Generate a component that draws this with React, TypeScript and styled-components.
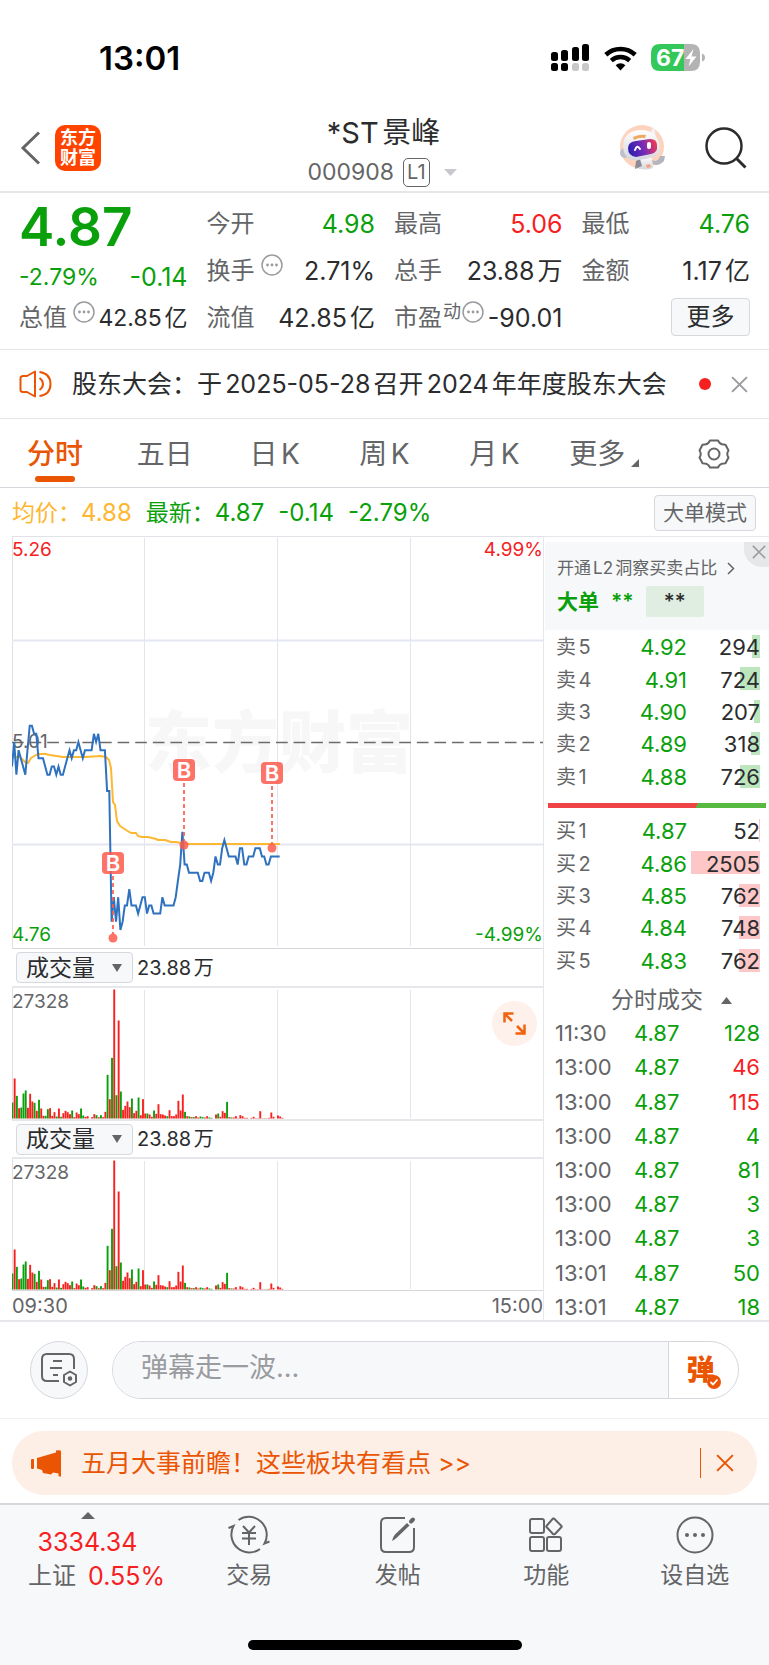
import React from "react";
import styled, { createGlobalStyle } from "styled-components";

const C = {
  green: "#09a00b",
  red: "#f6211f",
  text: "#2b2c2e",
  grey: "#646567",
  faint: "#999b9f",
  line: "#e6e7eb",
  strong: "#d6d8de",
  orange: "#ea5504",
  panel: "#f7f8fa",
};

type Tone = "green" | "red" | "text" | "grey";

const GlobalStyle = createGlobalStyle`
  *, *::before, *::after { box-sizing: border-box; }
  body {
    margin: 0;
    background: #fff;
    color: ${C.text};
    font-family: Inter, "Noto Sans CJK SC", sans-serif;
    font-size: 24px;
    line-height: 30px;
    text-autospace: normal;
  }
  button, input {
    margin: 0;
    padding: 0;
    border: 0;
    background: none;
    color: inherit;
    font: inherit;
    text-autospace: inherit;
  }
  button { cursor: pointer; }
  svg { display: block; flex-shrink: 0; }
`;

const Page = styled.div`
  display: flex;
  flex-direction: column;
  min-height: 100vh;
`;

/* ---------- status bar ---------- */

const StatusBar = styled.div`
  height: 108px;
  padding: 8px 64px 0 99px;
  display: flex;
  align-items: center;
  justify-content: space-between;
`;

const Clock = styled.time`
  color: #000;
  font-size: 33px;
  line-height: 40px;
  font-weight: 600;
`;

const StatusIcons = styled.div`
  display: flex;
  align-items: center;
  gap: 14px;
`;

/* ---------- header ---------- */

const Header = styled.header`
  height: 85px;
  padding: 0 22px 0 20px;
  border-bottom: 2px solid ${C.line};
  display: grid;
  grid-template-columns: 1fr auto 1fr;
  align-items: center;
`;

const HeaderSide = styled.div<{ $end?: boolean }>`
  padding-bottom: 4px;
  display: flex;
  align-items: center;
  justify-content: ${(p) => (p.$end ? "flex-end" : "flex-start")};
  gap: ${(p) => (p.$end ? 40 : 14)}px;
`;

const IconButton = styled.button`
  display: flex;
  align-items: center;
  justify-content: center;
`;

const Logo = styled.a`
  width: 46px;
  height: 46px;
  border-radius: 10px;
  background: #ff4400;
  color: #fff;
  font-size: 18px;
  line-height: 20px;
  font-weight: 700;
  text-align: center;
  text-decoration: none;
  display: flex;
  flex-direction: column;
  justify-content: center;
`;

const TitleBlock = styled.div`
  padding-top: 4px;
  display: flex;
  flex-direction: column;
  align-items: center;
  gap: 7px;
`;

const Title = styled.h1`
  margin: 0;
  font-size: 29px;
  line-height: 34px;
  font-weight: 400;
`;

const Code = styled.div`
  padding-right: 3px;
  display: flex;
  align-items: center;
  gap: 9px;
  color: ${C.grey};
  font-size: 23px;
`;

const Level = styled.span`
  height: 29px;
  padding: 0 3px;
  border: 1px solid ${C.grey};
  border-radius: 5px;
  font-size: 20px;
  line-height: 27px;
`;

const CodeCaret = styled.span`
  margin-left: 5px;
`;

/* ---------- quote ---------- */

const Quote = styled.section`
  height: 157px;
  padding: 7px 19px 0;
  border-bottom: 1px solid ${C.line};
  display: grid;
  grid-template-columns: repeat(4, 1fr);
  grid-template-rows: repeat(3, 47px);
  column-gap: 19px;
`;

const Headline = styled.div`
  grid-row: span 2;
  display: flex;
  flex-direction: column;
  justify-content: space-between;
  color: ${C.green};
`;

const Price = styled.strong`
  font-size: 53px;
  line-height: 54px;
  font-weight: 600;
`;

const Change = styled.div`
  display: flex;
  justify-content: space-between;
  font-size: 23px;
  line-height: 34px;
`;

const ChangeAmount = styled.span`
  font-size: 25px;
`;

const Stat = styled.div`
  display: flex;
  align-items: center;
  white-space: nowrap;
`;

const StatLabel = styled.span`
  color: ${C.grey};
`;

const StatNote = styled.span<{ $gap: number }>`
  margin: 0 0 12px ${(p) => p.$gap}px;
  display: flex;
  align-items: center;
  color: ${C.faint};
`;

const Superscript = styled.span`
  color: ${C.grey};
  font-size: 18px;
  line-height: 24px;
`;

const StatValue = styled.span<{ $tone: Tone; $tight?: boolean }>`
  margin-left: auto;
  color: ${(p) => C[p.$tone]};
  font-size: ${(p) => (p.$tight ? 23 : 25)}px;
`;

const OutlineButton = styled.button`
  border: 1px solid ${C.strong};
  border-radius: 4px;
  background: ${C.panel};
`;

const MoreButton = styled(OutlineButton)`
  width: 79px;
  height: 38px;
  margin: 0 0 2px auto;
  line-height: 34px;
`;

/* ---------- notice ---------- */

const Notice = styled.section`
  height: 69px;
  padding: 0 21px 0 19px;
  border-bottom: 1px solid ${C.line};
  display: flex;
  align-items: center;
`;

const NoticeText = styled.a`
  flex: 1;
  min-width: 0;
  margin-left: 19px;
  overflow: hidden;
  color: inherit;
  font-size: 25px;
  text-decoration: none;
  white-space: nowrap;
`;

const Dot = styled.span`
  width: 12px;
  height: 12px;
  margin: 0 20px 0 14px;
  border-radius: 50%;
  background: ${C.red};
`;

/* ---------- tabs ---------- */

const Tabs = styled.nav`
  height: 69px;
  border-bottom: 1px solid ${C.strong};
  display: grid;
  grid-template-columns: repeat(7, 1fr);
`;

const Tab = styled.button<{ $active?: boolean }>`
  position: relative;
  padding-top: 1px;
  display: flex;
  align-items: center;
  justify-content: center;
  gap: 6px;
  color: ${(p) => (p.$active ? C.orange : C.grey)};
  font-size: 28px;
  font-weight: ${(p) => (p.$active ? 500 : 400)};

  &::after {
    content: "";
    display: ${(p) => (p.$active ? "block" : "none")};
    position: absolute;
    bottom: 5px;
    left: calc(50% - 20px);
    width: 40px;
    height: 6px;
    border-radius: 3px;
    background: ${C.orange};
  }
`;

const TabCorner = styled.span`
  align-self: flex-end;
  margin-bottom: 20px;
`;

/* ---------- chart summary ---------- */

const Summary = styled.div`
  height: 48px;
  padding: 1px 13px 0 12px;
  display: flex;
  align-items: center;
  gap: 14px;
  color: ${C.green};
  font-size: 23px;
`;

const Average = styled.span`
  color: #feb731;
`;

const Figure = styled.span`
  font-size: 24px;
`;

const ModeButton = styled(OutlineButton)`
  height: 36px;
  margin-left: auto;
  padding: 0 8px;
  color: ${C.grey};
  font-size: 21px;
  line-height: 32px;
`;

/* ---------- market area ---------- */

const Market = styled.main`
  padding-left: 12px;
  border-bottom: 2px solid ${C.line};
  display: grid;
  grid-template-columns: 1fr 226px;
`;

const Charts = styled.div`
  position: relative;
  min-width: 0;
`;

const ChartSvg = styled.svg`
  width: 100%;
  height: auto;
  font-family: Inter, "Noto Sans CJK SC", sans-serif;
`;

const VolumeHead = styled.div<{ $top: string }>`
  height: 40px;
  padding: 0 4px;
  border-top: ${(p) => p.$top};
  border-bottom: 2px solid ${C.line};
  display: flex;
  align-items: center;
  gap: 4px;
  font-size: 20px;
`;

const IndicatorButton = styled(OutlineButton)`
  width: 117px;
  height: 31px;
  padding: 0 10px 0 9px;
  display: flex;
  align-items: center;
  justify-content: space-between;
  font-size: 23px;
  line-height: 28px;
`;

const Axis = styled.div`
  height: 29px;
  border-top: 1px solid ${C.strong};
  display: flex;
  justify-content: space-between;
  color: ${C.grey};
  font-size: 20px;
  line-height: 30px;
`;

const ExpandButton = styled.button`
  position: absolute;
  top: 465px;
  right: 6px;
  width: 45px;
  height: 45px;
  border-radius: 50%;
  background: #fef0ea;
  display: flex;
  align-items: center;
  justify-content: center;
`;

const Side = styled.aside`
  padding-top: 5px;
  border-top: 1px solid ${C.line};
  border-left: 1px solid ${C.line};
  overflow: hidden;
`;

const Promo = styled.div`
  position: relative;
  height: 88px;
  margin: 0 0 1px 1px;
  padding: 11px 12px 0;
  background: ${C.panel};
`;

const PromoLink = styled.a`
  display: flex;
  align-items: center;
  gap: 10px;
  color: ${C.grey};
  font-size: 17px;
  text-decoration: none;
  white-space: nowrap;
`;

const PromoClose = styled.button`
  position: absolute;
  top: 0;
  right: 0;
  width: 25px;
  height: 25px;
  padding: 3px 3px 0 0;
  border-bottom-left-radius: 18px;
  background: #e6e7e9;
  display: flex;
  align-items: flex-start;
  justify-content: flex-end;
`;

const BigOrder = styled.div`
  margin-top: 3px;
  display: flex;
  align-items: center;
  gap: 12px;
  color: ${C.green};
  font-size: 21px;
  font-weight: 600;
`;

const Masked = styled.span`
  width: 58px;
  height: 31px;
  border-radius: 2px;
  background: #e0eee1;
  color: ${C.text};
  line-height: 31px;
  font-weight: 500;
  text-align: center;
`;

const Book = styled.table`
  width: 100%;
  height: 162px;
  border-collapse: collapse;
  color: ${C.text};
  font-size: 22px;
  line-height: 26px;

  th, td {
    padding: 0;
    font-weight: 400;
    text-align: right;
  }
  th {
    width: 60px;
    padding-left: 12px;
    color: ${C.grey};
    font-size: 20px;
    text-align: left;
  }
`;

const BookPrice = styled.td`
  width: 83px;
  color: ${C.green};
`;

const BookVolume = styled.td`
  position: relative;

  && { padding-right: 9px; }
`;

const BookBar = styled.span<{ $tone: "green" | "red" }>`
  position: absolute;
  top: 4px;
  right: 9px;
  height: 23px;
  background: ${(p) => (p.$tone === "green" ? "#bde6bf" : "#fdc7c7")};
`;

const BookNumber = styled.span`
  position: relative;
`;

const Balance = styled.div`
  height: 5px;
  margin: 10px 3px 7px 4px;
  background: linear-gradient(120deg, #ee4445 68%, #57b942 68%);
`;

const TradesTitle = styled.button`
  width: 100%;
  height: 32px;
  margin-top: 7px;
  padding-left: 30px;
  display: flex;
  align-items: center;
  justify-content: center;
  gap: 18px;
  color: ${C.grey};
  font-size: 23px;
`;

const Trades = styled.table`
  width: 100%;
  height: 308px;
  margin-bottom: -4px;
  border-collapse: collapse;
  font-size: 22px;
  line-height: 24px;

  td { padding: 0; }
`;

const TradeTime = styled.td`
  width: 90px;
  && { padding-left: 11px; }
  color: ${C.grey};
`;

const TradePrice = styled.td`
  color: ${C.green};
`;

const TradeVolume = styled.td<{ $tone: Tone }>`
  && { padding-right: 9px; }
  color: ${(p) => C[p.$tone]};
  text-align: right;
`;

/* ---------- comment bar ---------- */

const Composer = styled.form`
  height: 97px;
  padding: 0 30px;
  border-bottom: 1px solid #f0f0f1;
  display: flex;
  align-items: center;
  gap: 24px;
`;

const RoundButton = styled.button`
  width: 58px;
  height: 58px;
  border: 1px solid ${C.strong};
  border-radius: 50%;
  background: ${C.panel};
  display: flex;
  align-items: center;
  justify-content: center;
`;

const Pill = styled.div`
  flex: 1;
  min-width: 0;
  height: 58px;
  border: 1px solid ${C.strong};
  border-radius: 29px;
  display: flex;
  overflow: hidden;
`;

const CommentInput = styled.input`
  flex: 1;
  min-width: 0;
  padding: 0 28px 4px;
  background: ${C.panel};
  font-size: 27px;
  outline: none;

  &::placeholder { color: ${C.faint}; opacity: 1; }
`;

const DanmuButton = styled.button`
  width: 70px;
  padding-right: 6px;
  border-left: 1px solid ${C.strong};
  display: flex;
  align-items: center;
  justify-content: center;
`;

const DanmuMark = styled.span`
  position: relative;
  color: ${C.orange};
  font-size: 28px;
  font-weight: 900;

  svg {
    position: absolute;
    right: -6px;
    bottom: -4px;
  }
`;

/* ---------- banner ---------- */

const BannerWrap = styled.div`
  height: 84px;
  padding: 12px 12px 0;
`;

const Banner = styled.div`
  height: 64px;
  padding: 0 23px 0 19px;
  border-radius: 32px;
  background: #fdeee6;
  color: ${C.orange};
  display: flex;
  align-items: center;
`;

const BannerText = styled.a`
  flex: 1;
  margin-left: 19px;
  color: inherit;
  font-size: 25px;
  text-decoration: none;
`;

const BannerRule = styled.span`
  width: 1px;
  height: 30px;
  margin-right: 15px;
  background: ${C.orange};
`;

/* ---------- bottom navigation ---------- */

const BottomBar = styled.footer`
  flex: 1;
  min-height: 163px;
  border-top: 2px solid ${C.strong};
  background: ${C.panel};
  display: flex;
  flex-direction: column;
  align-items: center;
  justify-content: space-between;
`;

const BottomNav = styled.nav`
  width: 100%;
  display: grid;
  grid-template-columns: 175px repeat(4, 1fr);
`;

const IndexButton = styled.button`
  padding-top: 7px;
  display: flex;
  flex-direction: column;
  align-items: center;
  color: ${C.red};
  font-size: 25px;
`;

const IndexValue = styled.span`
  margin: 8px 0 4px;
`;

const IndexRow = styled.span`
  padding-left: 18px;
  display: flex;
  gap: 12px;
`;

const IndexName = styled.span`
  color: ${C.grey};
  font-size: 24px;
`;

const NavButton = styled.button`
  padding-top: 10px;
  display: flex;
  flex-direction: column;
  align-items: center;
  gap: 5px;
  color: ${C.grey};
  font-size: 23px;
`;

const HomeIndicator = styled.div`
  width: 274px;
  height: 10px;
  margin-bottom: 16px;
  border-radius: 5px;
  background: #000;
`;

/* ---------- icons ---------- */

const Triangle = ({ w, h, up, color = C.grey }: { w: number; h: number; up?: boolean; color?: string }) => (
  <svg width={w} height={h} viewBox="0 0 10 10" preserveAspectRatio="none" aria-hidden="true">
    <path d={up ? "M5 0L10 10H0Z" : "M0 0H10L5 10Z"} fill={color} />
  </svg>
);

const Cross = ({ size, color }: { size: number; color: string }) => (
  <svg width={size} height={size} viewBox="0 0 16 16" aria-hidden="true">
    <path d="M1 1L15 15M15 1L1 15" stroke={color} strokeWidth="1.800" fill="none" />
  </svg>
);

const SignalIcon = () => (
  <svg width="39" height="28" viewBox="0 0 39 28" aria-hidden="true">
    <g fill="#000">
      <rect x="0" y="8" width="7" height="9" rx="2.500" />
      <rect x="10" y="6" width="7" height="11" rx="2.500" />
      <rect x="21" y="3" width="7" height="14" rx="2.500" />
      <rect x="31" y="0" width="7" height="17" rx="2.500" />
      <rect x="0" y="19" width="7" height="8" rx="2.500" />
      <rect x="10" y="19" width="7" height="8" rx="2.500" />
    </g>
    <g fill="#c8c8c8">
      <rect x="21" y="19" width="7" height="8" rx="2.500" />
      <rect x="31" y="19" width="7" height="8" rx="2.500" />
    </g>
  </svg>
);

const WifiIcon = () => (
  <svg width="33" height="25" viewBox="0 0 33 25" aria-hidden="true">
    <path d="M1.800 8.800A21.500 21.500 0 0 1 31.200 8.800" fill="none" stroke="#000" strokeWidth="4.600" />
    <path d="M7.300 14.600A13.500 13.500 0 0 1 25.700 14.600" fill="none" stroke="#000" strokeWidth="4.400" />
    <path d="M11.600 19.200A7 7 0 0 1 21.400 19.200L16.500 24.500Z" fill="#000" />
  </svg>
);

const BatteryIcon = () => (
  <svg width="54" height="28" viewBox="0 0 54 28" aria-label="67%">
    <path d="M33 0H40Q49 0 49 9V18Q49 27 40 27H33Z" fill="#b3b3b3" />
    <path d="M33 0H9Q0 0 0 9V18Q0 27 9 27H33Z" fill="#34c759" />
    <path d="M51 9.500Q54 10.500 54 13.500T51 17.500Z" fill="#b3b3b3" />
    <path d="M42.500 5L34.500 15H39.500L37.500 22.500L45.500 12.500H40.500Z" fill="#fff" />
    <text x="5" y="22" fill="#fff" fontSize="23" fontWeight="700" fontFamily="Inter, sans-serif">67</text>
  </svg>
);

const RobotIcon = () => (
  <svg width="45" height="45" viewBox="0 0 45 45" aria-hidden="true">
    <defs>
      <linearGradient id="visor" x1="0" y1="0.600" x2="1" y2="0.400">
        <stop offset="0" stopColor="#2d1fb0" />
        <stop offset="0.550" stopColor="#7a2bb5" />
        <stop offset="1" stopColor="#ef3a55" />
      </linearGradient>
      <linearGradient id="shell" x1="0" y1="0" x2="0" y2="1">
        <stop offset="0" stopColor="#fff" />
        <stop offset="1" stopColor="#d5d6de" />
      </linearGradient>
    </defs>
    <circle cx="22" cy="22" r="22" fill="#fdd3bd" />
    <path d="M19 32Q26 29 32 33L33 43Q26 46 18 43Z" fill="url(#shell)" />
    <path d="M16 36L20 34L22 41L15 44Z" fill="#8d8c96" />
    <path d="M32 35Q38 38 40 31L45 31L44 36Q38 42 33 39Z" fill="#b4b4bf" />
    <path d="M26 40L30 39L31 42L27 43Z" fill="#f3a27e" />
    <circle cx="5" cy="28" r="5" fill="#bfc0ca" />
    <path d="M30 8L34 1L36 12Z" fill="#f2f2f5" />
    <path d="M3 22Q3 7 19 5Q34 4 39 17Q42 30 33 32Q22 36 11 35Q4 32 3 22Z" fill="url(#shell)" />
    <path d="M13 12Q20 9 26 10L25 13Q19 12 14 15Z" fill="#f2a65e" />
    <path d="M8 23Q8 17 16 16L30 14Q37 14 37 20Q38 28 31 29L16 32Q8 31 8 23Z" fill="url(#visor)" />
    <path d="M15 25Q17 19 20 24" fill="none" stroke="#fff" strokeWidth="2" strokeLinecap="round" />
    <rect x="27" y="17" width="4" height="7" rx="2" fill="#fff" />
  </svg>
);

const InfoIcon = () => (
  <svg width="22" height="22" viewBox="0 0 22 22" aria-hidden="true">
    <circle cx="11" cy="11" r="10" fill="none" stroke="currentColor" strokeWidth="1.500" />
    <g fill="currentColor">
      <circle cx="6.500" cy="11" r="1.400" />
      <circle cx="11" cy="11" r="1.400" />
      <circle cx="15.500" cy="11" r="1.400" />
    </g>
  </svg>
);

const SpeakerIcon = () => (
  <svg width="34" height="28" viewBox="0 0 34 28" fill="none" stroke={C.orange} strokeWidth="2" aria-hidden="true">
    <path d="M16 1.500V26.500L8 22H4Q1.500 22 1.500 19.500V8.500Q1.500 6 4 6H8Z" strokeLinejoin="round" />
    <path d="M20.500 8Q24 10.500 24 14T20.500 20" />
    <path d="M20.500 2Q31.500 3.500 31.500 14T20.500 26" />
  </svg>
);

const GearIcon = () => (
  <svg width="32" height="32" viewBox="0 0 32 32" fill="none" stroke={C.grey} strokeWidth="2" aria-hidden="true">
    <path
      d="M12 2.500H20Q22 6.500 25.500 6.500L27.500 6.800L30.500 12.500Q28 16 30.500 19.500L27.500 25.200L25.500 25.500Q22 25.500 20 29.500H12Q10 25.500 6.500 25.500L4.500 25.200L1.500 19.500Q4 16 1.500 12.500L4.500 6.800L6.500 6.500Q10 6.500 12 2.500Z"
      strokeLinejoin="round"
    />
    <circle cx="16" cy="16" r="5.500" />
  </svg>
);

const ExpandIcon = () => (
  <svg width="23" height="23" viewBox="0 0 23 23" fill="none" stroke="#f4610f" strokeWidth="2.500" aria-hidden="true">
    <path d="M10.500 1.500H1.500V10.500M1.500 1.500L9 9" />
    <path d="M12.500 21.500H21.500V12.500M21.500 21.500L14 14" />
  </svg>
);

const NoteIcon = () => (
  <svg width="38" height="34" viewBox="0 0 38 34" fill="none" stroke={C.grey} strokeWidth="2" aria-hidden="true">
    <path d="M19 28H7Q2 28 2 23V6Q2 1 7 1H29Q34 1 34 6V16" />
    <path d="M13 8H22M10 15H22M13 22H18" />
    <path d="M30 18.500L36 22V29L30 32.500L24 29V22Z" strokeLinejoin="round" />
    <circle cx="30" cy="25.500" r="1.300" fill={C.grey} />
  </svg>
);

const CheckBadge = () => (
  <svg width="14" height="14" viewBox="0 0 14 14" aria-hidden="true">
    <circle cx="7" cy="7" r="7" fill={C.orange} />
    <path d="M3.500 7L6 9.500L10.500 4.500" fill="none" stroke="#fff" strokeWidth="1.800" />
  </svg>
);

const MegaphoneIcon = () => (
  <svg width="31" height="27" viewBox="0 0 31 27" fill={C.orange} aria-hidden="true">
    <rect x="0" y="9" width="3" height="10" rx="1" />
    <path d="M6 8L25 2.500V0.500Q30 0 30 1V26Q30 27 27.500 26V23.500L22 22.500L20 24.500L12 23L11 20L6 18.500Z" />
  </svg>
);

const TradeIcon = () => (
  <svg width="42" height="40" viewBox="0 0 42 40" fill="none" stroke="currentColor" strokeWidth="2" aria-hidden="true">
    <path d="M10.500 5A18 18 0 0 1 36.500 28.500L41.500 26.500" />
    <path d="M32 34A18 18 0 0 1 5.500 11L0.500 13" />
    <path d="M15 11L21 17.500L27 11M21 17.500V30M14 18H28M14 23.500H28" />
  </svg>
);

const PostIcon = () => (
  <svg width="36" height="40" viewBox="0 0 36 40" fill="none" stroke="currentColor" strokeWidth="2" aria-hidden="true">
    <path d="M25 3H6Q1 3 1 8V32Q1 37 6 37H29Q34 37 34 32V13" />
    <path d="M12 26Q13 21.500 15 19.500L27 8L29.500 10.500L17 22.500Q14.500 24.500 12 26Z" fill="currentColor" stroke="none" />
    <path d="M31 6.500L33 4.500" strokeWidth="4" strokeLinecap="round" />
  </svg>
);

const GridIcon = () => (
  <svg width="36" height="40" viewBox="0 0 36 40" fill="none" stroke="currentColor" strokeWidth="2" aria-hidden="true">
    <rect x="2" y="4" width="14" height="14" rx="2" />
    <rect x="2" y="22" width="14" height="14" rx="2" />
    <rect x="19" y="22" width="14" height="14" rx="2" />
    <path d="M26 3.500L33.500 11Q34 11.500 33.500 12L27 19Q26 19.500 25 19L18.500 12Q18 11.500 18.500 11L25 3.500Z" strokeLinejoin="round" />
  </svg>
);

const DotsIcon = () => (
  <svg width="38" height="40" viewBox="0 0 38 40" aria-hidden="true">
    <circle cx="19" cy="20" r="17.500" fill="none" stroke="currentColor" strokeWidth="2" />
    <g fill="currentColor">
      <circle cx="11" cy="20" r="2" />
      <circle cx="19" cy="20" r="2" />
      <circle cx="27" cy="20" r="2" />
    </g>
  </svg>
);

/* ---------- data ---------- */

type StatItem = { label: string; value: string; tone: Tone; info?: boolean; sup?: string; tight?: boolean };

const stats: StatItem[] = [
  { label: "今开", value: "4.98", tone: "green" },
  { label: "最高", value: "5.06", tone: "red" },
  { label: "最低", value: "4.76", tone: "green" },
  { label: "换手", value: "2.71%", tone: "text", info: true },
  { label: "总手", value: "23.88万", tone: "text" },
  { label: "金额", value: "1.17亿", tone: "text" },
  { label: "总值", value: "42.85亿", tone: "text", info: true, tight: true },
  { label: "流值", value: "42.85亿", tone: "text" },
  { label: "市盈", value: "-90.01", tone: "text", info: true, sup: "动" },
];

// Last price of each minute since the open, in hundredths.
const prices = [
  498, 501, 497, 500, 499, 498, 497, 500, 503, 503, 502, 502, 499, 499, 499, 498, 497, 497, 498, 498, 497, 498, 497,
  497, 498, 499, 500, 499, 500, 500, 501, 500, 499, 500, 500, 500, 500, 502, 501, 502, 500, 500, 500, 495, 495, 479,
  482, 479, 482, 478, 479, 481, 481, 483, 481, 481, 481, 480, 481, 482, 482, 480, 481, 481, 480, 480, 480, 480, 482,
  481, 481, 481, 481, 481, 482, 484, 486, 490, 486, 486, 485, 485, 485, 485, 485, 484, 484, 485, 485, 485, 484, 485,
  487, 486, 486, 488, 489, 488, 487, 487, 487, 487, 486, 488, 488, 486, 486, 487, 487, 487, 488, 488, 488, 487, 487,
  486, 486, 487, 487, 487, 487, 487,
];

const averageLine =
  "0,221 8,221 13,226 16,227 19,222 24,219 28,218 33,218 38,219 51,221 61,221 74,221 88,220 94,221 97,224 99,232 101,266 103,269 105,285 108,290 114,294 119,297 124,297 126,300 130,301 136,301 144,303 146,304 153,304 159,306 164,306 169,307 176,308 214,308 218,308 268,308";

// Turnover of each minute: bar height in thirds of a pixel, with its direction.
const volumes =
  "g48 r120 g68 r31 g33 g75 g84 r32 r74 r51 g47 r23 g56 r30 r8 g8 g28 r31 r8 r19 g6 r30 g5 r16 r23 r19 r13 g24 r4 r18 r13 g30 g9 r5 r7 r0 r4 r13 g10 r4 g10 r4 r20 g131 r58 g182 r387 g70 r294 g81 r26 r38 r51 r34 g60 r16 r23 g63 r10 r58 r15 g15 r12 r5 g24 r14 r43 r13 r12 r9 g7 r25 r7 r7 r12 r53 r24 r72 g20 r7 g6 r4 g4 r7 r3 g6 g4 r3 r7 g3 g2 r0 r12 g15 r5 r22 r17 g50 r4 g3 r3 r7 r1 r10 r7 r2 r2 r0 r2 r5 r1 r1 r22 r1 g1 r1 r2 r18 r5 r0 r9 r6 r2"
    .split(" ")
    .map((s) => ({ up: s[0] === "r", size: Number(s.slice(1)) / 3 }));

const asks: [string, string, number][] = [
  ["卖5", "4.92", 294],
  ["卖4", "4.91", 724],
  ["卖3", "4.90", 207],
  ["卖2", "4.89", 318],
  ["卖1", "4.88", 726],
];

const bids: [string, string, number][] = [
  ["买1", "4.87", 52],
  ["买2", "4.86", 2505],
  ["买3", "4.85", 762],
  ["买4", "4.84", 748],
  ["买5", "4.83", 762],
];

const trades: [string, string, number, Tone][] = [
  ["11:30", "4.87", 128, "green"],
  ["13:00", "4.87", 46, "red"],
  ["13:00", "4.87", 115, "red"],
  ["13:00", "4.87", 4, "green"],
  ["13:00", "4.87", 81, "green"],
  ["13:00", "4.87", 3, "green"],
  ["13:00", "4.87", 3, "green"],
  ["13:01", "4.87", 50, "green"],
  ["13:01", "4.87", 18, "green"],
];

const MINUTE = 531 / 240;
const priceY = (p: number) => 206 + (501 - p) * 8.17;
const priceLine = prices.map((p, i) => `${(i * MINUTE).toFixed(1)},${priceY(p).toFixed(1)}`).join(" ");

const markers = [
  { x: 101, top: 316, dot: 402 },
  { x: 172, top: 223, dot: 309 },
  { x: 260, top: 226, dot: 312 },
];

/* ---------- parts ---------- */

const GridLines = ({ height }: { height: number }) => (
  <path d={`M132.500 2V${height}M265.500 2V${height}M398.500 2V${height}`} stroke="#e2e4ee" />
);

const PriceChart = () => (
  <ChartSvg viewBox="0 0 531 412" role="img" aria-label="分时走势">
    <text x="133" y="231" fontSize="67" fontWeight="900" fill="#f7f7f8">东方财富</text>
    <path d="M0 0.500H531M0.500 0V412" stroke="#e0e2e7" fill="none" />
    <GridLines height={410} />
    <path d="M0 104.500H531M0 308.500H531" stroke="#e4e7f1" strokeWidth="2" />
    <path d="M0 206.500H531" stroke="#6b6b6b" strokeWidth="1.300" strokeDasharray="11.700 5.900" />
    <text x="0" y="212" fontSize="19" fill={C.grey}>5.01</text>
    <polyline points={averageLine} fill="none" stroke="#feb731" strokeWidth="2" strokeLinejoin="round" />
    <polyline points={priceLine} fill="none" stroke="#2e72bf" strokeWidth="2" />
    {markers.map((m) => (
      <g key={m.x}>
        <path d={`M${m.x} ${m.top + 24}V${m.dot - 4}`} stroke="#fd5b4e" strokeOpacity="0.850" strokeWidth="2" strokeDasharray="4 3" />
        <circle cx={m.x} cy={m.dot} r="4.500" fill="#fd5b4e" fillOpacity="0.850" />
        <rect x={m.x - 11} y={m.top} width="22" height="22" rx="4" fill="#fd5b4e" fillOpacity="0.850" />
        <text x={m.x} y={m.top + 19} fontSize="22" fontWeight="600" fill="#fff" textAnchor="middle">B</text>
      </g>
    ))}
    <text x="0" y="20" fontSize="19" fill={C.red}>5.26</text>
    <text x="531" y="20" fontSize="19" fill={C.red} textAnchor="end">4.99%</text>
    <text x="0" y="405" fontSize="19" fill={C.green}>4.76</text>
    <text x="531" y="405" fontSize="19" fill={C.green} textAnchor="end">-4.99%</text>
  </ChartSvg>
);

const VolumeChart = () => (
  <ChartSvg viewBox="0 0 531 131" role="img" aria-label="成交量">
    <GridLines height={130} />
    <path d="M0.500 0V131" stroke="#e0e2e7" />
    {volumes.map((v, i) => (
      <rect key={i} x={i * MINUTE - 0.5} y={130.5 - v.size} width="1.900" height={v.size} fill={v.up ? C.red : C.green} />
    ))}
    <text x="0" y="20" fontSize="19" fill={C.grey}>27328</text>
  </ChartSvg>
);

const VolumePanel = ({ top }: { top: string }) => (
  <>
    <VolumeHead $top={top}>
      <IndicatorButton type="button">
        成交量
        <Triangle w={10} h={8} />
      </IndicatorButton>
      <span>23.88万</span>
    </VolumeHead>
    <VolumeChart />
  </>
);

const OrderRows = ({ rows, tone }: { rows: [string, string, number][]; tone: "green" | "red" }) => (
  <Book>
    <tbody>
      {rows.map(([name, price, volume]) => (
        <tr key={name}>
          <th scope="row">{name}</th>
          <BookPrice>{price}</BookPrice>
          <BookVolume>
            <BookBar $tone={tone} style={{ width: Math.max(1, Math.round((volume / 2505) * 69)) }} />
            <BookNumber>{volume}</BookNumber>
          </BookVolume>
        </tr>
      ))}
    </tbody>
  </Book>
);

const StatCell = ({ item }: { item: StatItem }) => (
  <Stat>
    <StatLabel>{item.label}</StatLabel>
    {item.sup && (
      <StatNote $gap={1}>
        <Superscript>{item.sup}</Superscript>
      </StatNote>
    )}
    {item.info && (
      <StatNote $gap={item.sup ? 1 : 6}>
        <InfoIcon />
      </StatNote>
    )}
    <StatValue $tone={item.tone} $tight={item.tight}>{item.value}</StatValue>
  </Stat>
);

const navItems = [
  { label: "交易", Icon: TradeIcon },
  { label: "发帖", Icon: PostIcon },
  { label: "功能", Icon: GridIcon },
  { label: "设自选", Icon: DotsIcon },
];

export default function App() {
  return (
    <Page>
      <GlobalStyle />
      <StatusBar>
        <Clock>13:01</Clock>
        <StatusIcons>
          <SignalIcon />
          <WifiIcon />
          <BatteryIcon />
        </StatusIcons>
      </StatusBar>

      <Header>
        <HeaderSide>
          <IconButton type="button" aria-label="返回">
            <svg width="21" height="34" viewBox="0 0 21 34" aria-hidden="true">
              <path d="M19 1.500L3 17L19 32.500" fill="none" stroke={C.grey} strokeWidth="3" />
            </svg>
          </IconButton>
          <Logo href="#home">
            <span>东方</span>
            <span>财富</span>
          </Logo>
        </HeaderSide>
        <TitleBlock>
          <Title>*ST景峰</Title>
          <Code>
            <span>000908</span>
            <Level>L1</Level>
            <CodeCaret>
              <Triangle w={13} h={7} color="#c8c9cc" />
            </CodeCaret>
          </Code>
        </TitleBlock>
        <HeaderSide $end>
          <IconButton type="button" aria-label="智能助手">
            <RobotIcon />
          </IconButton>
          <IconButton type="button" aria-label="搜索">
            <svg width="42" height="42" viewBox="0 0 42 42" aria-hidden="true">
              <circle cx="19" cy="19" r="17.500" fill="none" stroke="#2b2c2e" strokeWidth="2.500" />
              <path d="M31 31L40.500 40.500" stroke="#2b2c2e" strokeWidth="3" />
            </svg>
          </IconButton>
        </HeaderSide>
      </Header>

      <Quote>
        <Headline>
          <Price>4.87</Price>
          <Change>
            <span>-2.79%</span>
            <ChangeAmount>-0.14</ChangeAmount>
          </Change>
        </Headline>
        {stats.map((item) => (
          <StatCell key={item.label} item={item} />
        ))}
        <Stat>
          <MoreButton type="button">更多</MoreButton>
        </Stat>
      </Quote>

      <Notice>
        <SpeakerIcon />
        <NoticeText href="#notice">股东大会：于2025-05-28召开2024年年度股东大会</NoticeText>
        <Dot />
        <IconButton type="button" aria-label="关闭公告">
          <Cross size={17} color={C.faint} />
        </IconButton>
      </Notice>

      <Tabs>
        <Tab type="button" $active>分时</Tab>
        <Tab type="button">五日</Tab>
        <Tab type="button">日K</Tab>
        <Tab type="button">周K</Tab>
        <Tab type="button">月K</Tab>
        <Tab type="button">
          更多
          <TabCorner>
            <svg width="8" height="8" viewBox="0 0 8 8" aria-hidden="true">
              <path d="M8 0V8H0Z" fill={C.grey} />
            </svg>
          </TabCorner>
        </Tab>
        <Tab type="button" aria-label="设置">
          <GearIcon />
        </Tab>
      </Tabs>

      <Summary>
        <Average>
          均价：<Figure>4.88</Figure>
        </Average>
        <span>
          最新：<Figure>4.87</Figure>
        </span>
        <Figure>-0.14</Figure>
        <Figure>-2.79%</Figure>
        <ModeButton type="button">大单模式</ModeButton>
      </Summary>

      <Market>
        <Charts>
          <PriceChart />
          <VolumePanel top={`1px solid ${C.strong}`} />
          <VolumePanel top={`2px solid ${C.line}`} />
          <Axis>
            <span>09:30</span>
            <span>15:00</span>
          </Axis>
          <ExpandButton type="button" aria-label="放大">
            <ExpandIcon />
          </ExpandButton>
        </Charts>

        <Side>
          <Promo>
            <PromoLink href="#level2">
              开通L2洞察买卖占比
              <svg width="8" height="13" viewBox="0 0 8 13" aria-hidden="true">
                <path d="M1 1L6.500 6.500L1 12" fill="none" stroke={C.grey} strokeWidth="1.500" />
              </svg>
            </PromoLink>
            <BigOrder>
              <span>大单</span>
              <span>**</span>
              <Masked>**</Masked>
            </BigOrder>
            <PromoClose type="button" aria-label="关闭">
              <Cross size={14} color={C.faint} />
            </PromoClose>
          </Promo>
          <OrderRows rows={asks} tone="green" />
          <Balance />
          <OrderRows rows={bids} tone="red" />
          <TradesTitle type="button">
            分时成交
            <Triangle w={11} h={7} up />
          </TradesTitle>
          <Trades>
            <tbody>
              {trades.map(([time, price, volume, tone], i) => (
                <tr key={i}>
                  <TradeTime>{time}</TradeTime>
                  <TradePrice>{price}</TradePrice>
                  <TradeVolume $tone={tone}>{volume}</TradeVolume>
                </tr>
              ))}
            </tbody>
          </Trades>
        </Side>
      </Market>

      <Composer onSubmit={(e) => e.preventDefault()}>
        <RoundButton type="button" aria-label="弹幕设置">
          <NoteIcon />
        </RoundButton>
        <Pill>
          <CommentInput type="text" aria-label="弹幕" placeholder="弹幕走一波..." />
          <DanmuButton type="button">
            <DanmuMark>
              弹
              <CheckBadge />
            </DanmuMark>
          </DanmuButton>
        </Pill>
      </Composer>

      <BannerWrap>
        <Banner>
          <MegaphoneIcon />
          <BannerText href="#events">五月大事前瞻！这些板块有看点 &gt;&gt;</BannerText>
          <BannerRule />
          <IconButton type="button" aria-label="关闭横幅">
            <Cross size={18} color={C.orange} />
          </IconButton>
        </Banner>
      </BannerWrap>

      <BottomBar>
        <BottomNav>
          <IndexButton type="button">
            <Triangle w={14} h={7} up />
            <IndexValue>3334.34</IndexValue>
            <IndexRow>
              <IndexName>上证</IndexName>
              <span>0.55%</span>
            </IndexRow>
          </IndexButton>
          {navItems.map(({ label, Icon }) => (
            <NavButton key={label} type="button">
              <Icon />
              {label}
            </NavButton>
          ))}
        </BottomNav>
        <HomeIndicator />
      </BottomBar>
    </Page>
  );
}
